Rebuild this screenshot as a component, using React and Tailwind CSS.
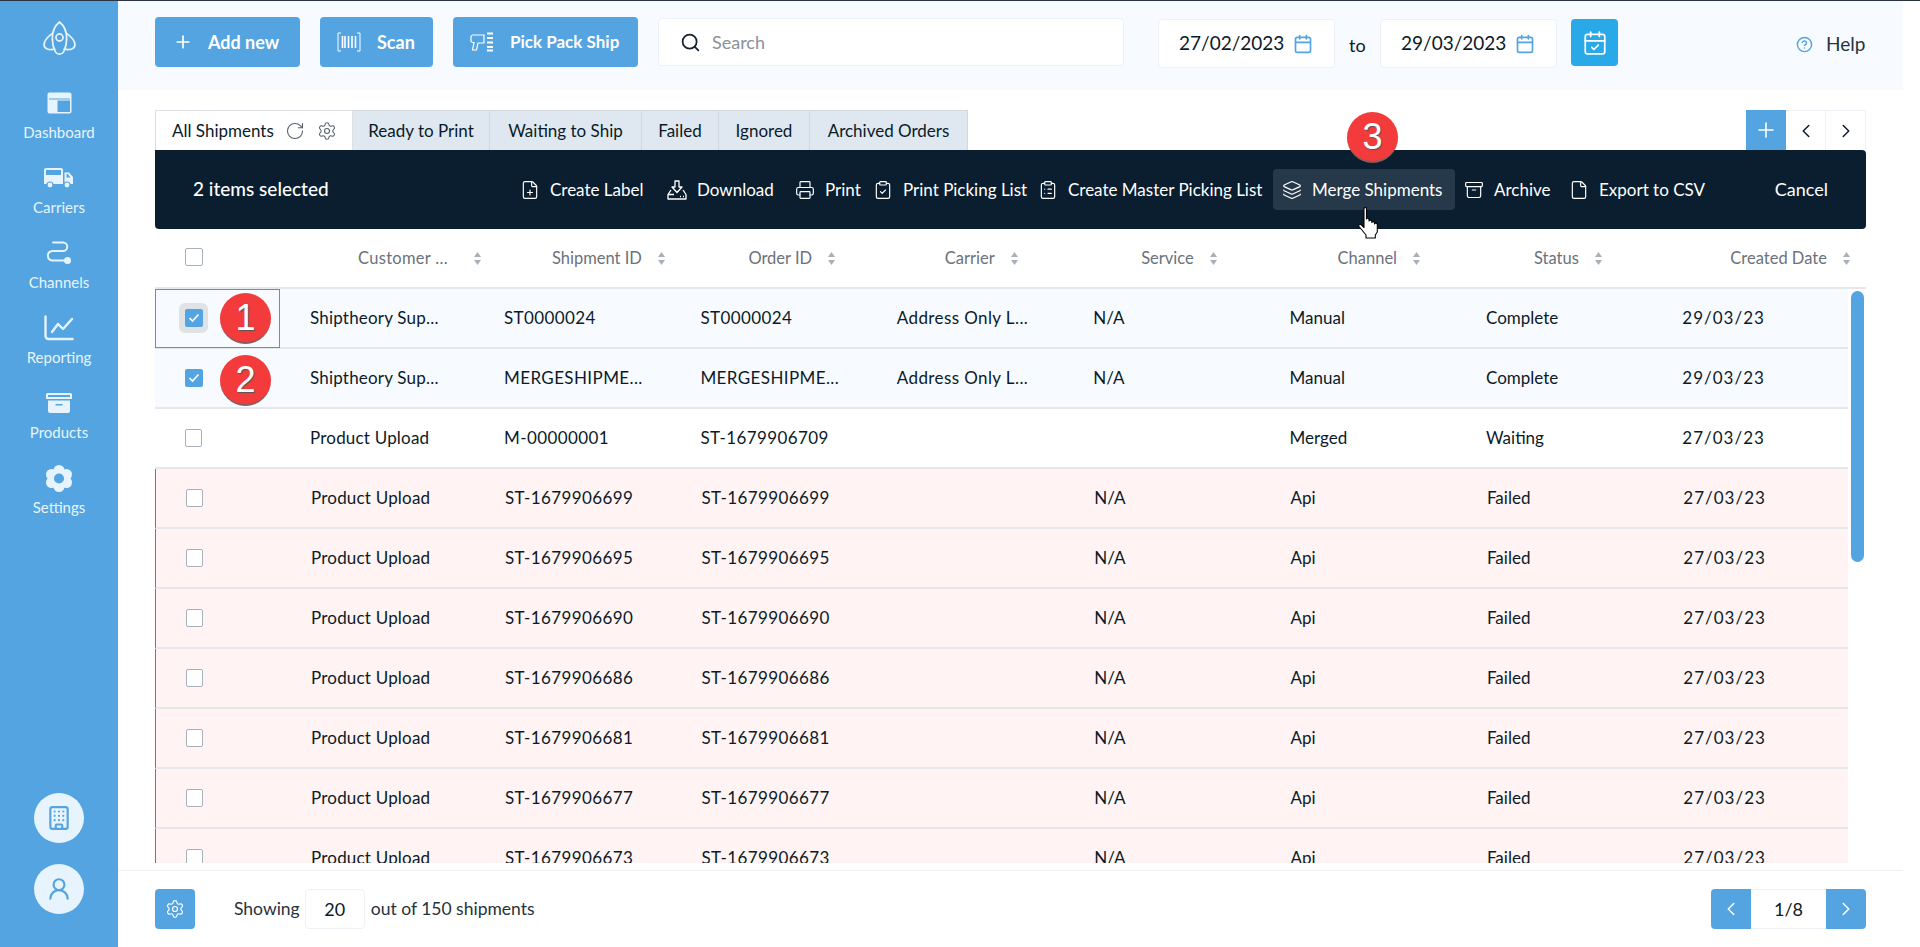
import React from 'react';
import {
  Archive, Building, Calendar, CalendarCheck, ChevronLeft, ChevronRight, CircleHelp, ClipboardCheck,
  ClipboardList, File, FilePlus, Layers, Plus, Printer, RotateCw, Search, Settings, UserRound,
} from 'lucide-react';

const failedIds = ['699', '695', '690', '686', '681', '677', '673'];

const rows = [
  { customer: 'Shiptheory Sup...', shipment: 'ST0000024', order: 'ST0000024', carrier: 'Address Only L...', service: 'N/A', channel: 'Manual', status: 'Complete', date: '29/03/23', kind: 'selected' },
  { customer: 'Shiptheory Sup...', shipment: 'MERGESHIPME...', order: 'MERGESHIPME...', carrier: 'Address Only L...', service: 'N/A', channel: 'Manual', status: 'Complete', date: '29/03/23', kind: 'selected' },
  { customer: 'Product Upload', shipment: 'M-00000001', order: 'ST-1679906709', carrier: '', service: '', channel: 'Merged', status: 'Waiting', date: '27/03/23', kind: 'plain' },
  ...failedIds.map(id => ({
    customer: 'Product Upload', shipment: `ST-1679906${id}`, order: `ST-1679906${id}`, carrier: '', service: 'N/A', channel: 'Api', status: 'Failed', date: '27/03/23', kind: 'failed',
  })),
];

const columns = ['Shipment ID', 'Order ID', 'Carrier', 'Service', 'Channel', 'Status', 'Created Date'];

const LogoIcon = () => (
  <svg width="33" height="35" viewBox="0 0 32 34" fill="none" stroke="#e8f4fd" strokeWidth="1.7">
    <path d="M16 1C11 5 9 11 9 17c0 5 1 9 3 13 2 3 6 3 8 0 2-4 3-8 3-13 0-6-2-12-7-16Z" />
    <circle cx="16" cy="16" r="3.4" />
    <path d="M9 12c-4 3-8 7-8 11 0 4 5 6 11 4" />
    <path d="M23 12c4 3 8 7 8 11 0 4-5 6-11 4" />
  </svg>
);

const DashboardIcon = () => (
  <svg width="25" height="22" viewBox="0 0 25 22">
    <rect x="0.5" y="0.5" width="24" height="21" rx="2" fill="#e8f4fd" />
    <rect x="2" y="6.5" width="21" height="1" fill="#53a4e0" />
    <rect x="10.5" y="8.5" width="12.5" height="11.5" fill="#53a4e0" />
  </svg>
);

const TruckIcon = () => (
  <svg width="29" height="21" viewBox="0 0 29 21">
    <path d="M2 0h15a2 2 0 0 1 2 2v14H0V2a2 2 0 0 1 2-2Zm0 2v5h15V2Z" fill="#e8f4fd" fillRule="evenodd" />
    <path d="M20.500 4.500H25l4 4.500v7h-8.500Zm2 1.500v3.500h4L23.800 6Z" fill="#e8f4fd" fillRule="evenodd" />
    <circle cx="6" cy="17" r="3" fill="#e8f4fd" stroke="#53a4e0" strokeWidth="1.200" />
    <circle cx="23" cy="17" r="3" fill="#e8f4fd" stroke="#53a4e0" strokeWidth="1.200" />
  </svg>
);

const ChannelsIcon = () => (
  <svg width="26" height="24" viewBox="0 0 26 24" fill="none" stroke="#e8f4fd" strokeWidth="2" strokeLinecap="round">
    <path d="M7 1.500h10a4 4 0 0 1 0 8.500H6a4.800 4.800 0 0 0 0 9.500h14" />
    <circle cx="21.500" cy="19.500" r="3.500" fill="#e8f4fd" stroke="none" />
  </svg>
);

const ReportingIcon = () => (
  <svg width="30" height="26" viewBox="0 0 30 26" fill="none" stroke="#e8f4fd" strokeWidth="2.400" strokeLinecap="round" strokeLinejoin="round">
    <path d="M1.500 1.500V21a3 3 0 0 0 3 3h24" />
    <path d="M8 17l6-8 5 5 9-10" />
  </svg>
);

const ProductsIcon = () => (
  <svg width="26" height="20" viewBox="0 0 26 20" fill="#e8f4fd">
    <path d="M1.500 0h23A1.500 1.500 0 0 1 26 1.500V6H0V1.500A1.500 1.500 0 0 1 1.500 0Zm.500 2v2h22V2Z" fillRule="evenodd" />
    <path d="M2 7.500h22V18a2 2 0 0 1-2 2H4a2 2 0 0 1-2-2Zm7.500 3.500v1.500h7V11Z" fillRule="evenodd" />
  </svg>
);

const CogIcon = () => (
  <svg width="26" height="27" viewBox="0 0 26 27">
    <g fill="#e8f4fd">
      <circle cx="13" cy="5.500" r="5.500" />
      <circle cx="13" cy="21.500" r="5.500" />
      <circle cx="5.500" cy="9.500" r="5.500" />
      <circle cx="20.500" cy="9.500" r="5.500" />
      <circle cx="5.500" cy="17.500" r="5.500" />
      <circle cx="20.500" cy="17.500" r="5.500" />
    </g>
    <circle cx="13" cy="13.500" r="5" fill="#53a4e0" />
  </svg>
);

const ScanIcon = () => (
  <svg width="24" height="20" viewBox="0 0 24 20" fill="none" stroke="#fff" strokeWidth="1">
    <path d="M4 1H1v18h3M20 1h3v18h-3" />
    <path d="M5.500 4v12M8 4v12M11.500 4v12M15 4v12M18.500 4v12" strokeWidth="1.600" />
  </svg>
);

const PickIcon = () => (
  <svg width="24" height="20" viewBox="0 0 24 20" fill="none" stroke="#fff" strokeWidth="1.200">
    <path d="M3 3h11v8H8l-1.500 7H2.500L4 10.500H3a2 2 0 0 1-2-2V5a2 2 0 0 1 2-2Z" />
    <path d="M17 1.500h6M17 6h6M17 10.500h6M17 15h6M17 18.500h6" strokeWidth="2" />
  </svg>
);

const DownloadTrayIcon = () => (
  <svg width="20" height="20" viewBox="0 0 20 20" fill="none" stroke="#fff" strokeWidth="1.300" strokeLinejoin="round">
    <path d="M8 1h4v6h3l-5 5.500L5 7h3Z" />
    <path d="M4 10l-3 4.500V19h18v-4.500L16 10M1 14.500h6" />
    <path d="M13 16.500h1M16 16.500h1" />
  </svg>
);

const SortIcon = () => (
  <svg width="7" height="13" viewBox="0 0 7 13" fill="#a9b0b8">
    <path d="M3.500 0 7 5H0Z" />
    <path d="M3.500 13 0 8h7Z" />
  </svg>
);

const HandCursor = () => (
  <svg width="22" height="32" viewBox="0 0 22 32" fill="#fff" stroke="#000" strokeWidth="1.100" strokeLinejoin="round">
    <path d="M6 1.500c0-1.300 2.500-1.300 2.500 0V12c0-1 2.500-1 2.500 .5V14c0-1.300 2.800-1.300 2.800 .5v1c0-1.200 2.700-1.200 2.700 .5v1c0-1.200 2.800-1.200 2.800 .5V25l-2 3v3H8v-3L1 19.500c-1-2 1-3 2.500-1.500L6 20.500Z" />
  </svg>
);

const NavItem = ({ icon, label }) => (
  <div className="flex h-[75px] flex-col items-center">
    <div className="flex h-[30px] items-center">{icon}</div>
    <span className="mt-[4px] text-[15px] leading-[20px] text-[#e8f4fd]">{label}</span>
  </div>
);

const BarAction = ({ icon, label, active, className }) => (
  <button className={`flex h-[41px] shrink-0 items-center gap-[10px] whitespace-nowrap rounded pl-[9px] text-[17px] text-white ${active ? 'bg-[#26394a]' : ''} ${className}`}>
    {icon}
    {label}
  </button>
);

const Checkbox = ({ checked }) => (
  checked ? (
    <span className="flex h-[18px] w-[18px] items-center justify-center rounded-[2px] bg-[#53a4e0]">
      <svg width="12" height="10" viewBox="0 0 12 10" fill="none" stroke="#fff" strokeWidth="1.600"><path d="M1.500 5 4.500 8 10.500 1.500" /></svg>
    </span>
  ) : (
    <span className="block h-[18px] w-[17px] rounded-[2px] border border-[#a7b1bb] bg-white" />
  )
);

const Marker = ({ className, children }) => (
  <div className={`absolute z-20 flex h-[51px] w-[51px] items-center justify-center rounded-full border-b-2 border-[#8c5a5a] bg-[#f43b3b] font-['Liberation_Sans',sans-serif] text-[36px] text-white [text-shadow:1px_1px_1px_#555] ${className}`}>
    {children}
  </div>
);

const gridCols = 'grid-cols-[143px_194px_repeat(6,196.4px)_1fr]';

export default function App() {
  return (
    <div className="relative flex h-[947px] w-full overflow-hidden border-t border-[#2b3240] bg-white font-['Lato',sans-serif] text-[#0b1a28]">
      {/* Sidebar */}
      <aside className="flex w-[118px] shrink-0 flex-col items-center bg-[#53a4e0] pb-[33px]">
        <div className="mt-[20px] mb-[32px]"><LogoIcon /></div>
        <NavItem icon={<DashboardIcon />} label="Dashboard" />
        <NavItem icon={<TruckIcon />} label="Carriers" />
        <NavItem icon={<ChannelsIcon />} label="Channels" />
        <NavItem icon={<ReportingIcon />} label="Reporting" />
        <NavItem icon={<ProductsIcon />} label="Products" />
        <NavItem icon={<CogIcon />} label="Settings" />
        <div className="mt-auto flex flex-col gap-[21px]">
          <div className="flex h-[50px] w-[50px] items-center justify-center rounded-full bg-[#e8f4fd] text-[#53a4e0]"><Building size={26} /></div>
          <div className="flex h-[50px] w-[50px] items-center justify-center rounded-full bg-[#e8f4fd] text-[#53a4e0]"><UserRound size={26} /></div>
        </div>
      </aside>

      <main className="flex w-[1785px] shrink-0 flex-col">
        {/* Top bar */}
        <header className="flex h-[89px] shrink-0 items-start bg-[#f7faff] pl-[37px] pt-[16px]">
          <button className="flex h-[50px] w-[145px] items-center gap-[15px] rounded bg-[#53a4e0] pl-[18px] text-[18px] font-bold text-white"><Plus size={20} />Add new</button>
          <button className="ml-[20px] flex h-[50px] w-[113px] items-center gap-[16px] rounded bg-[#53a4e0] pl-[17px] text-[18px] font-bold text-white"><ScanIcon />Scan</button>
          <button className="ml-[20px] flex h-[50px] w-[185px] items-center gap-[16px] rounded bg-[#53a4e0] pl-[17px] text-[17px] font-bold text-white"><PickIcon />Pick Pack Ship</button>
          <div className="ml-[20px] mt-[1px] flex h-[48px] w-[466px] items-center gap-[11px] rounded border border-[#eef1f6] bg-white pl-[21px]">
            <Search size={21} className="text-[#16222e]" />
            <span className="text-[18px] text-[#8a9199]">Search</span>
          </div>
          <div className="ml-[34px] mt-[2px] flex h-[49px] w-[177px] items-center gap-[9px] rounded border border-[#eef1f6] bg-white pl-[20px] text-[19px]">
            27/02/2023<Calendar size={20} className="text-[#53a4e0]" />
          </div>
          <span className="ml-[14px] mt-[18px] w-[31px] text-[18px] leading-[20px]">to</span>
          <div className="mt-[2px] flex h-[49px] w-[177px] items-center gap-[9px] rounded border border-[#eef1f6] bg-white pl-[20px] text-[19px]">
            29/03/2023<Calendar size={20} className="text-[#53a4e0]" />
          </div>
          <button className="ml-[14px] mt-[2px] flex h-[47px] w-[47px] items-center justify-center rounded bg-[#2aa9e8] text-white"><CalendarCheck size={26} strokeWidth={1.6} /></button>
          <div className="ml-[178px] mt-[13px] flex items-center gap-[13px] text-[19px] text-[#26323e]">
            <CircleHelp size={17} className="text-[#53a4e0]" />Help
          </div>
        </header>

        <div className="flex min-h-0 flex-1 flex-col pl-[37px] pr-[37px]">
          {/* Tabs */}
          <div className="mt-[20px] flex h-[40px] shrink-0 items-stretch text-[17px]">
            <div className="flex w-[198px] items-center border-x border-t border-[#dcdfe3] pl-[16px]">
              All Shipments
              <RotateCw size={20} strokeWidth={1.3} className="ml-[11px] text-[#55606b]" />
              <Settings size={20} strokeWidth={1.3} className="ml-[12px] text-[#55606b]" />
            </div>
            <div className="flex w-[137px] items-center justify-center border-r border-t border-[#d3d8de] bg-[#dfe8f1]">Ready to Print</div>
            <div className="flex w-[152px] items-center justify-center border-r border-t border-[#d3d8de] bg-[#dfe8f1]">Waiting to Ship</div>
            <div className="flex w-[77px] items-center justify-center border-r border-t border-[#d3d8de] bg-[#dfe8f1]">Failed</div>
            <div className="flex w-[91px] items-center justify-center border-r border-t border-[#d3d8de] bg-[#dfe8f1]">Ignored</div>
            <div className="flex w-[158px] items-center justify-center border-r border-t border-[#d3d8de] bg-[#dfe8f1]">Archived Orders</div>
            <div className="ml-auto flex">
              <button className="flex w-[40px] items-center justify-center bg-[#53a4e0] text-white"><Plus size={24} strokeWidth={1.6} /></button>
              <button className="flex w-[40px] items-center justify-center border-r border-t border-[#eef1f6]"><ChevronLeft size={22} strokeWidth={1.6} /></button>
              <button className="flex w-[40px] items-center justify-center border-r border-t border-[#eef1f6]"><ChevronRight size={22} strokeWidth={1.6} /></button>
            </div>
          </div>

          {/* Selection bar */}
          <div className="flex h-[79px] shrink-0 items-center rounded-b rounded-tr bg-[#0a1e30] pl-[38px] pr-[38px] text-white">
            <span className="w-[318px] shrink-0 text-[19px] font-medium">2 items selected</span>
            <div className="flex items-center">
              <BarAction className="w-[147px]" icon={<FilePlus size={20} strokeWidth={1.4} />} label="Create Label" />
              <BarAction className="w-[128px]" icon={<DownloadTrayIcon />} label="Download" />
              <BarAction className="w-[78px]" icon={<Printer size={20} strokeWidth={1.4} />} label="Print" />
              <BarAction className="w-[165px]" icon={<ClipboardCheck size={20} strokeWidth={1.4} />} label="Print Picking List" />
              <BarAction className="w-[244px]" icon={<ClipboardList size={20} strokeWidth={1.4} />} label="Create Master Picking List" />
              <BarAction className="w-[182px]" active icon={<Layers size={20} strokeWidth={1.4} />} label="Merge Shipments" />
              <BarAction className="w-[105px]" icon={<Archive size={20} strokeWidth={1.4} />} label="Archive" />
              <BarAction className="w-[160px]" icon={<File size={20} strokeWidth={1.4} />} label="Export to CSV" />
            </div>
            <span className="ml-auto text-[18px]">Cancel</span>
          </div>

          {/* Table header */}
          <div className={`grid h-[60px] shrink-0 items-center border-b-2 border-[#e4e7eb] ${gridCols} text-[16.5px] text-[#6a727b]`}>
            <div className="pl-[30px]"><span className="-mt-[3px] block h-[18px] w-[18px] rounded-[2px] border border-[#a7b1bb]" /></div>
            <div className="flex items-center gap-[26px] pl-[60px] tracking-[0.3px]">Customer ...<SortIcon /></div>
            {columns.map(col => (
              <div key={col} className="flex items-center gap-[16px] whitespace-nowrap pl-[60px]">{col}<SortIcon /></div>
            ))}
          </div>

          {/* Table body */}
          <div className="relative mb-[7px] min-h-0 flex-1 overflow-hidden">
            <div className="pr-[18px]">
              {rows.map((row, i) => (
                <div
                  key={i}
                  className={`grid h-[60px] items-center border-b-2 border-[#e4e7eb] ${gridCols} text-[17px] ${row.kind === 'selected' ? 'bg-[#f7faff]' : row.kind === 'failed' ? 'border-l border-l-[#ee4444] bg-[#fff4f3]' : ''}`}
                >
                  <div className="pl-[30px]"><Checkbox checked={row.kind === 'selected'} /></div>
                  <div className="pl-[12px] tracking-[0.2px]">{row.customer}</div>
                  <div className="pl-[12px] tracking-[0.4px]">{row.shipment}</div>
                  <div className="pl-[12px] tracking-[0.4px]">{row.order}</div>
                  <div className="pl-[12px] tracking-[0.4px]">{row.carrier}</div>
                  <div className="pl-[12px]">{row.service}</div>
                  <div className="pl-[12px]">{row.channel}</div>
                  <div className="pl-[12px]">{row.status}</div>
                  <div className="pl-[12px] tracking-[1px]">{row.date}</div>
                </div>
              ))}
            </div>
            {/* Focused checkbox cell */}
            <div className="absolute left-0 top-0 h-[59px] w-[125px] border border-[#3ba0d8]">
              <div className="absolute left-[23px] top-[13px] flex h-[30px] w-[29px] items-center justify-center rounded-md bg-[#dfe3e6]"><Checkbox checked /></div>
            </div>
            {/* Scrollbar */}
            <div className="absolute right-[2px] top-[2px] h-[271px] w-[13px] rounded-full bg-[#53a4e0]" />
          </div>
        </div>

        {/* Footer */}
        <footer className="flex h-[77px] shrink-0 items-center border-t border-[#eef1f6] pl-[37px] pr-[37px] text-[17.5px]">
          <button className="flex h-[40px] w-[40px] items-center justify-center rounded bg-[#53a4e0] text-white"><Settings size={20} strokeWidth={1.4} /></button>
          <span className="ml-[39px] text-[#26323e]">Showing</span>
          <div className="ml-[5px] flex h-[40px] w-[60px] items-center justify-center rounded border border-[#eef1f6] text-[18px]">20</div>
          <span className="ml-[6px] text-[#26323e]">out of 150 shipments</span>
          <div className="ml-auto flex h-[40px]">
            <button className="flex w-[40px] items-center justify-center rounded-l bg-[#53a4e0] text-white"><ChevronLeft size={22} strokeWidth={1.6} /></button>
            <div className="flex w-[75px] items-center justify-center border-y border-[#eef1f6] text-[18px]">1/8</div>
            <button className="flex w-[40px] items-center justify-center rounded-r bg-[#53a4e0] text-white"><ChevronRight size={22} strokeWidth={1.6} /></button>
          </div>
        </footer>
      </main>

      {/* Tutorial markers */}
      <Marker className="left-[220px] top-[292px]">1</Marker>
      <Marker className="left-[220px] top-[354px]">2</Marker>
      <Marker className="left-[1347px] top-[111px]">3</Marker>
      <div className="absolute left-[1358px] top-[206px] z-20"><HandCursor /></div>
    </div>
  );
}
